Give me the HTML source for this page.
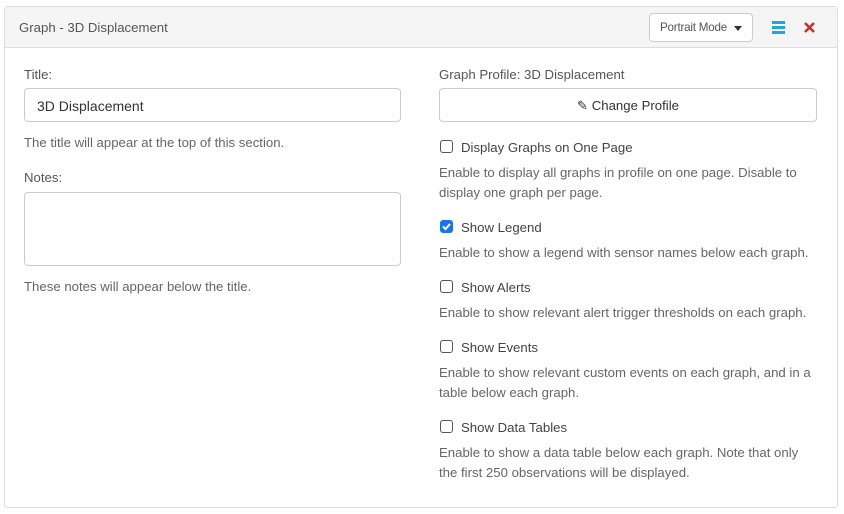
<!DOCTYPE html>
<html><head><style>
*{box-sizing:border-box;margin:0;padding:0}
body{width:844px;height:514px;background:#fff;font-family:"Liberation Sans",sans-serif;font-size:13.2px;color:#555;position:relative;overflow:hidden}
.panel{position:absolute;left:4px;top:6px;width:834px;height:502px;border:1px solid #ddd;border-radius:3px}
.hd{height:41px;background:#f5f5f5;border-bottom:1px solid #ddd;position:relative}
.hd .t{position:absolute;left:14px;top:13px;color:#555}
.pm{position:absolute;left:644px;top:6px;width:104px;height:29px;border:1px solid #ccc;border-radius:4px;background:#fff;font-size:11.6px;letter-spacing:-0.2px;color:#555;padding:7px 0 0 10px}
.pm:after{content:"";position:absolute;right:10px;top:12px;border-left:4px solid transparent;border-right:4px solid transparent;border-top:5px solid #333}
.ham{position:absolute;left:767px;top:14px;width:13px}
.ham i{display:block;height:2.5px;background:#1fa8d8;margin-bottom:2.5px}
.x{position:absolute;left:798px;top:14px}
.a{position:absolute;white-space:nowrap}
.inp{position:absolute;border:1px solid #ccc;border-radius:4px;background:#fff}
.help{color:#666;line-height:20px}
.cb{position:absolute;left:440px;width:13px;height:13px;border:1px solid #555;border-radius:3px;background:#fff}
.cb.on{background:#1a73e8;border-color:#1a73e8}
</style></head><body>
<div class="panel"><div class="hd"><span class="t">Graph - 3D Displacement</span>
<div class="pm">Portrait Mode</div>
<div class="ham"><i></i><i></i><i></i></div>
<svg class="x" width="13" height="13" viewBox="0 0 13 13"><path d="M2 2l9 9M11 2l-9 9" stroke="#c9302c" stroke-width="2.6"/></svg></div></div>

<div class="a" style="left:24px;top:67px">Title:</div>
<div class="inp" style="left:24px;top:88px;width:377px;height:34px;padding:9px 0 0 12px;color:#333;font-size:14px">3D Displacement</div>
<div class="a help" style="left:24px;top:133px">The title will appear at the top of this section.</div>
<div class="a" style="left:24px;top:170px">Notes:</div>
<div class="inp" style="left:24px;top:192px;width:377px;height:74px"></div>
<div class="a help" style="left:24px;top:277px">These notes will appear below the title.</div>

<div class="a" style="left:439px;top:67px">Graph Profile: 3D Displacement</div>
<div class="inp" style="left:439px;top:88px;width:378px;height:34px;text-align:center;padding-top:9px;color:#333">✎ Change Profile</div>

<div class="cb" style="top:140px"></div><div class="a" style="left:461px;top:140px;color:#444">Display Graphs on One Page</div>
<div class="a help" style="left:439px;top:163px">Enable to display all graphs in profile on one page. Disable to<br>display one graph per page.</div>

<div class="cb on" style="top:220px"><svg width="11" height="11" viewBox="0 0 11 11" style="position:absolute;left:0;top:0"><path d="M2 5.5l2.5 2.5 4.5-5" stroke="#fff" stroke-width="2" fill="none"/></svg></div><div class="a" style="left:461px;top:220px;color:#444">Show Legend</div>
<div class="a help" style="left:439px;top:243px">Enable to show a legend with sensor names below each graph.</div>

<div class="cb" style="top:280px"></div><div class="a" style="left:461px;top:280px;color:#444">Show Alerts</div>
<div class="a help" style="left:439px;top:303px">Enable to show relevant alert trigger thresholds on each graph.</div>

<div class="cb" style="top:340px"></div><div class="a" style="left:461px;top:340px;color:#444">Show Events</div>
<div class="a help" style="left:439px;top:363px">Enable to show relevant custom events on each graph, and in a<br>table below each graph.</div>

<div class="cb" style="top:420px"></div><div class="a" style="left:461px;top:420px;color:#444">Show Data Tables</div>
<div class="a help" style="left:439px;top:443px">Enable to show a data table below each graph. Note that only<br>the first 250 observations will be displayed.</div>
</body></html>
